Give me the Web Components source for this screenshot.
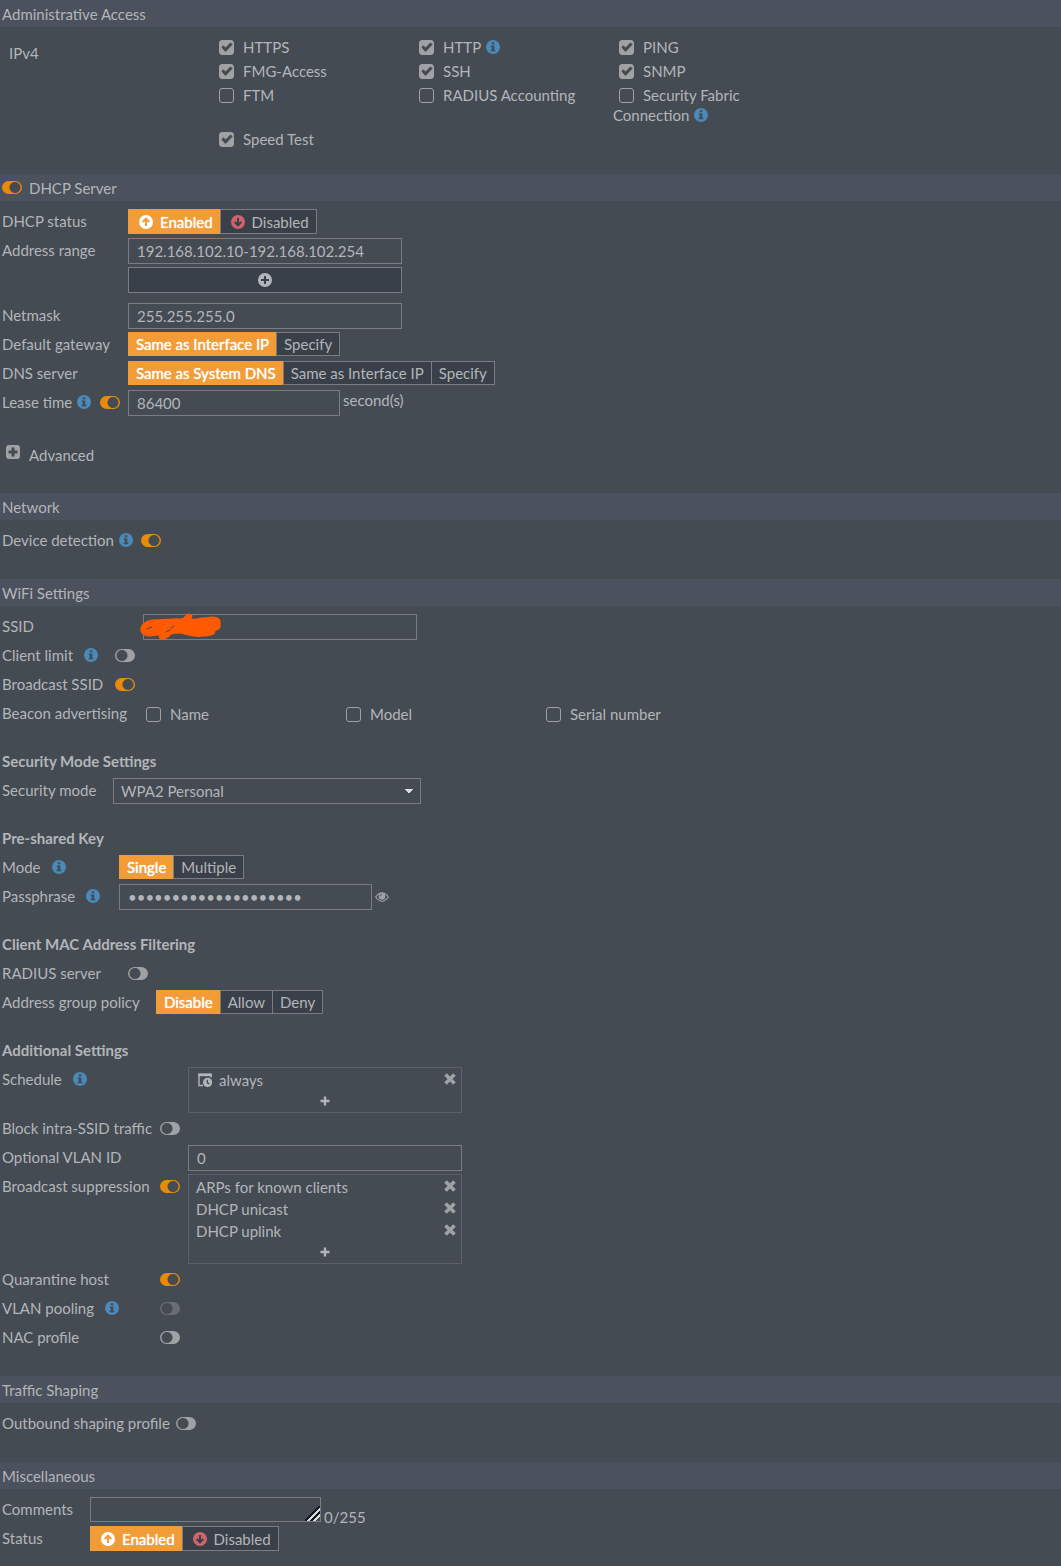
<!DOCTYPE html>
<html lang="en">
<head>
<meta charset="utf-8">
<meta name="viewport" content="width=device-width, initial-scale=1">
<title>Edit Interface</title>
<style>
  :root {
    --bg-color: #444b53;
    --header-color: #4b515d;
    --button-color: #3a4049;
    --text-color: #b3b6b9;
    --border-color: #7a7c81;
    --border-dim: #5c5f67;
    --icon-color: #a0a1a3;
    --info-color: #4a89b8;
    --accent-color: #f29c38;
    --switch-on: #e88a0c;
    --down-color: #d0646a;
  }

  body {
    margin: 0;
    background-color: var(--bg-color);
    color: var(--text-color);
    font: 15px/20px Lato, "Open Sans", sans-serif;
  }

  textarea::-webkit-resizer {
    background: linear-gradient(135deg, transparent 45%, #15181c 45% 54%, #d8dadc 54% 64%, #15181c 64% 74%, #d8dadc 74% 84%, transparent 84%);
  }
</style>
</head>
<body>

<main>
  <fw-section>
    <span slot="heading">Administrative Access</span>
    <fw-access>
      <span slot="label">IPv4</span>
      <fw-check checked>HTTPS</fw-check>
      <fw-check checked>HTTP <fw-icon name="info"></fw-icon></fw-check>
      <fw-check checked>PING</fw-check>
      <fw-check checked>FMG-Access</fw-check>
      <fw-check checked>SSH</fw-check>
      <fw-check checked>SNMP</fw-check>
      <fw-check>FTM</fw-check>
      <fw-check>RADIUS Accounting</fw-check>
      <fw-check>Security Fabric Connection <fw-icon name="info"></fw-icon></fw-check>
      <fw-check checked>Speed Test</fw-check>
    </fw-access>
  </fw-section>

  <fw-section style="--label-width: 118px">
    <input slot="switch" type="checkbox" role="switch" id="dhcp" checked>
    <label slot="heading" for="dhcp">DHCP Server</label>
    <fw-row>
      <span slot="label">DHCP status</span>
      <fw-segment tall label="DHCP status">
        <button type="button" aria-pressed="true"><fw-icon name="up"></fw-icon>Enabled</button>
        <button type="button" aria-pressed="false"><fw-icon name="down"></fw-icon>Disabled</button>
      </fw-segment>
    </fw-row>
    <fw-row stacked>
      <label slot="label" for="range">Address range</label>
      <input type="text" id="range" value="192.168.102.10-192.168.102.254">
      <button type="button" aria-label="Add address range"><fw-icon name="plus-circle"></fw-icon></button>
    </fw-row>
    <fw-row>
      <label slot="label" for="netmask">Netmask</label>
      <input type="text" id="netmask" value="255.255.255.0">
    </fw-row>
    <fw-row>
      <span slot="label">Default gateway</span>
      <fw-segment label="Default gateway">
        <button type="button" aria-pressed="true">Same as Interface IP</button>
        <button type="button" aria-pressed="false">Specify</button>
      </fw-segment>
    </fw-row>
    <fw-row>
      <span slot="label">DNS server</span>
      <fw-segment label="DNS server">
        <button type="button" aria-pressed="true">Same as System DNS</button>
        <button type="button" aria-pressed="false">Same as Interface IP</button>
        <button type="button" aria-pressed="false">Specify</button>
      </fw-segment>
    </fw-row>
    <fw-row style="--field-width: 212px" tight>
      <label slot="label" for="lease">Lease time</label>
      <fw-icon slot="info" name="info"></fw-icon>
      <input slot="switch" type="checkbox" role="switch" aria-label="Lease time enabled" checked>
      <input type="text" id="lease" value="86400">
      <span>second(s)</span>
    </fw-row>
    <fw-expander>Advanced</fw-expander>
  </fw-section>

  <fw-section style="--label-width: 159px">
    <span slot="heading">Network</span>
    <fw-row tight>
      <label slot="label" for="detection">Device detection</label>
      <fw-icon slot="info" name="info"></fw-icon>
      <input slot="switch" type="checkbox" role="switch" id="detection" checked>
    </fw-row>
  </fw-section>

  <fw-section>
    <span slot="heading">WiFi Settings</span>
    <fw-group style="--label-width: 133px">
      <fw-row>
        <label slot="label" for="ssid">SSID</label>
        <input type="text" id="ssid">
        <fw-scribble></fw-scribble>
      </fw-row>
      <fw-row>
        <label slot="label" for="limit">Client limit</label>
        <fw-icon slot="info" name="info"></fw-icon>
        <input slot="switch" type="checkbox" role="switch" id="limit">
      </fw-row>
      <fw-row>
        <label slot="label" for="broadcast">Broadcast SSID</label>
        <input slot="switch" type="checkbox" role="switch" id="broadcast" checked>
      </fw-row>
      <fw-row>
        <span slot="label">Beacon advertising</span>
        <fw-checks>
          <fw-check>Name</fw-check>
          <fw-check>Model</fw-check>
          <fw-check>Serial number</fw-check>
        </fw-checks>
      </fw-row>
    </fw-group>

    <fw-group heading="Security Mode Settings" style="--label-width: 103px; --field-width: 308px">
      <fw-row>
        <label slot="label" for="security">Security mode</label>
        <select id="security"><option>WPA2 Personal</option></select>
      </fw-row>
    </fw-group>

    <fw-group heading="Pre-shared Key" style="--label-width: 109px; --field-width: 253px">
      <fw-row>
        <span slot="label">Mode</span>
        <fw-icon slot="info" name="info"></fw-icon>
        <fw-segment label="Mode">
          <button type="button" aria-pressed="true">Single</button>
          <button type="button" aria-pressed="false">Multiple</button>
        </fw-segment>
      </fw-row>
      <fw-row>
        <label slot="label" for="passphrase">Passphrase</label>
        <fw-icon slot="info" name="info"></fw-icon>
        <input type="password" id="passphrase" value="wireless-passphrase1">
        <fw-reveal></fw-reveal>
      </fw-row>
    </fw-group>

    <fw-group heading="Client MAC Address Filtering" style="--label-width: 146px">
      <fw-row>
        <label slot="label" for="radius">RADIUS server</label>
        <input slot="switch" type="checkbox" role="switch" id="radius">
      </fw-row>
      <fw-row>
        <span slot="label">Address group policy</span>
        <fw-segment label="Address group policy">
          <button type="button" aria-pressed="true">Disable</button>
          <button type="button" aria-pressed="false">Allow</button>
          <button type="button" aria-pressed="false">Deny</button>
        </fw-segment>
      </fw-row>
    </fw-group>

    <fw-group heading="Additional Settings" style="--label-width: 178px">
      <fw-row>
        <span slot="label">Schedule</span>
        <fw-icon slot="info" name="info"></fw-icon>
        <fw-list>
          <fw-item><fw-icon name="schedule"></fw-icon>always</fw-item>
        </fw-list>
      </fw-row>
      <fw-row>
        <label slot="label" for="block">Block intra-SSID traffic</label>
        <input slot="switch" type="checkbox" role="switch" id="block">
      </fw-row>
      <fw-row>
        <label slot="label" for="vlan">Optional VLAN ID</label>
        <input type="text" id="vlan" value="0">
      </fw-row>
      <fw-row>
        <label slot="label" for="suppression">Broadcast suppression</label>
        <input slot="switch" type="checkbox" role="switch" id="suppression" checked>
        <fw-list>
          <fw-item>ARPs for known clients</fw-item>
          <fw-item>DHCP unicast</fw-item>
          <fw-item>DHCP uplink</fw-item>
        </fw-list>
      </fw-row>
      <fw-row>
        <label slot="label" for="quarantine">Quarantine host</label>
        <input slot="switch" type="checkbox" role="switch" id="quarantine" checked>
      </fw-row>
      <fw-row>
        <label slot="label" for="pooling">VLAN pooling</label>
        <fw-icon slot="info" name="info"></fw-icon>
        <input slot="switch" type="checkbox" role="switch" id="pooling" disabled>
      </fw-row>
      <fw-row>
        <label slot="label" for="nac">NAC profile</label>
        <input slot="switch" type="checkbox" role="switch" id="nac">
      </fw-row>
    </fw-group>
  </fw-section>

  <fw-section style="--label-width: 194px">
    <span slot="heading">Traffic Shaping</span>
    <fw-row>
      <label slot="label" for="shaping">Outbound shaping profile</label>
      <input slot="switch" type="checkbox" role="switch" id="shaping">
    </fw-row>
  </fw-section>

  <fw-section style="--label-width: 80px; --field-width: 231px">
    <span slot="heading">Miscellaneous</span>
    <fw-row>
      <label slot="label" for="comments">Comments</label>
      <textarea id="comments" maxlength="255"></textarea>
      <span class="counter">0/255</span>
    </fw-row>
    <fw-row>
      <span slot="label">Status</span>
      <fw-segment tall label="Status">
        <button type="button" aria-pressed="true"><fw-icon name="up"></fw-icon>Enabled</button>
        <button type="button" aria-pressed="false"><fw-icon name="down"></fw-icon>Disabled</button>
      </fw-segment>
    </fw-row>
  </fw-section>
</main>

<script>
// Adds an open shadow root filled from an HTML string
function render(element, html) {
  const template = document.createElement('template');
  template.innerHTML = html;
  element.attachShadow({ mode: 'open' }).appendChild(template.content.cloneNode(true));
}

// Shared by sections and rows, both take a switch in their "switch" slot
const switchStyles = `
  ::slotted(input[role="switch"]) {
    appearance: none;
    flex: none;
    width: 20px;
    height: 13px;
    margin: 0;
    border-radius: 7px;
    background: radial-gradient(circle at 7px 50%, var(--bg-color) 5px, var(--icon-color) 6px);
    cursor: pointer;
  }
  ::slotted(input[role="switch"]:checked) {
    background: radial-gradient(circle at 13px 50%, var(--bg-color) 5px, var(--switch-on) 6px);
  }
  ::slotted(input[role="switch"]:disabled) {
    opacity: 0.4;
    cursor: default;
  }
`;

const icons = {
  info: `<circle cx="7" cy="7" r="7" fill="var(--info-color)"/>
    <path d="M5.8 2.3h2.5v2H5.8zM4.9 5.5h3.4v4.3h1v1.5H4.7V9.8h1V7h-.8z" fill="var(--bg-color)"/>`,
  up: `<circle cx="7" cy="7" r="7" fill="#fff"/>
    <path d="M7 11V4M3.7 7 7 3.7 10.3 7" fill="none" stroke="var(--accent-color)" stroke-width="2"/>`,
  down: `<circle cx="7" cy="7" r="7" fill="var(--down-color)"/>
    <path d="M7 3v7M3.7 7 7 10.3 10.3 7" fill="none" stroke="var(--button-color)" stroke-width="2"/>`,
  'plus-circle': `<circle cx="7" cy="7" r="7" fill="var(--text-color)"/>
    <path d="M7 3v8M3 7h8" stroke="var(--button-color)" stroke-width="2"/>`,
  'plus-square': `<rect width="14" height="14" rx="3" fill="var(--icon-color)"/>
    <path d="M7 2.5v9M2.5 7h9" stroke="var(--bg-color)" stroke-width="3"/>`,
  plus: `<path d="M7 2.5v9M2.5 7h9" stroke="var(--text-color)" stroke-width="2.4"/>`,
  cross: `<path d="M2.5 2.5l9 9M11.5 2.5l-9 9" stroke="var(--icon-color)" stroke-width="3.6"/>`,
  schedule: `<path d="M5 12.5H1V1.5h12v3" fill="none" stroke="var(--text-color)" stroke-width="1.4"/>
    <path d="M.3.5h13.4v2.7H.3z" fill="var(--text-color)"/>
    <circle cx="9.6" cy="9.4" r="4.6" fill="var(--text-color)"/>
    <path d="M9.3 6.8v3l2 1" fill="none" stroke="var(--bg-color)" stroke-width="1.3"/>`,
  eye: `<path d="M.6 7C3 3.7 5 2.8 7 2.800S11 3.7 13.4 7C11 10.3 9 11.2 7 11.2S3 10.3.6 7z" fill="none" stroke="var(--icon-color)" stroke-width="1.1"/>
    <circle cx="7" cy="6.4" r="3.3" fill="var(--icon-color)"/>
    <path d="M5.2 6.3A1.9 1.9 0 0 1 7 4.6" fill="none" stroke="var(--bg-color)" stroke-width=".8"/>`
};

class FwIcon extends HTMLElement {
  connectedCallback() {
    if (this.shadowRoot) return;
    render(this, `
      <style>
        :host { display: inline-block; width: 14px; height: 14px; vertical-align: -1px; }
        svg { display: block; width: 100%; height: 100%; }
      </style>
      <svg viewBox="0 0 14 14" aria-hidden="true">${icons[this.getAttribute('name')]}</svg>
    `);
  }
}

class FwSection extends HTMLElement {
  constructor() {
    super();
    render(this, `
      <style>
        :host { display: block; }
        header {
          display: flex;
          align-items: center;
          gap: 7px;
          min-height: 27px;
          padding: 0 2px;
          background-color: var(--header-color);
        }
        .body { padding: 8px 0 22px; }
        ${switchStyles}
      </style>
      <header><slot name="switch"></slot><slot name="heading"></slot></header>
      <div class="body"><slot></slot></div>
    `);
  }
}

class FwGroup extends HTMLElement {
  connectedCallback() {
    if (this.shadowRoot) return;
    const heading = this.getAttribute('heading');
    render(this, `
      <style>
        :host { display: block; }
        h3 { margin: 0; padding: 19px 2px 5px; font-size: 15px; line-height: 24px; font-weight: 700; }
      </style>
      ${heading ? `<h3>${heading}</h3>` : ''}
      <slot></slot>
    `);
  }
}

class FwRow extends HTMLElement {
  constructor() {
    super();
    render(this, `
      <style>
        :host {
          display: grid;
          grid-template-columns: var(--label-width) minmax(0, 1fr);
          grid-auto-rows: minmax(26px, auto);
          column-gap: 8px;
          margin-bottom: 3px;
          padding-left: 2px;
        }
        :host([stacked]) { margin-bottom: 10px; }
        .label {
          display: flex;
          align-items: center;
          height: 24px;
          white-space: nowrap;
        }
        ::slotted([slot="info"]) { margin-left: 11px; }
        :host([tight]) ::slotted([slot="info"]) { margin-left: 5px; }
        .switch { display: flex; margin-left: auto; }
        .field {
          position: relative;
          display: flex;
          align-items: flex-start;
          gap: 3px;
        }
        :host([stacked]) .field { flex-direction: column; }
        ::slotted(input:not([role])), ::slotted(textarea), ::slotted(select), ::slotted(button) {
          box-sizing: border-box;
          width: var(--field-width, 274px);
          height: 26px;
          margin: 0;
          padding: 0 8px;
          border: 1px solid var(--border-color);
          border-radius: 0;
          outline: 0;
          background-color: transparent;
          color: inherit;
          font: inherit;
        }
        ::slotted(button) { background-color: var(--button-color); cursor: pointer; }
        ::slotted(textarea) { height: 25px; }
        ::slotted(select) {
          appearance: none;
          padding: 0 7px;
          background-image: conic-gradient(from -45deg at 50% 100%, #dcdddf 90deg, transparent 0);
          background-position: right 6px center;
          background-size: 10px 5px;
          background-repeat: no-repeat;
        }
        ::slotted(.counter) { align-self: flex-end; line-height: 12px; }
        ::slotted(fw-scribble) { position: absolute; left: -5px; top: -2px; }
        ${switchStyles}
      </style>
      <div class="label">
        <slot name="label"></slot>
        <slot name="info"></slot>
        <div class="switch"><slot name="switch"></slot></div>
      </div>
      <div class="field"><slot></slot></div>
    `);
  }
}

class FwCheck extends HTMLElement {
  connectedCallback() {
    if (this.shadowRoot) return;
    render(this, `
      <style>
        :host { display: block; padding: 2px 0; }
        ::slotted(fw-icon) { margin-left: 1px; }
        input {
          appearance: none;
          box-sizing: border-box;
          position: relative;
          width: 15px;
          height: 15px;
          margin: 0 9px 0 var(--box-indent, 6px);
          border: 1px solid var(--icon-color);
          border-radius: 3px;
          vertical-align: -2px;
        }
        input:checked { background-color: var(--icon-color); }
        input:checked::before {
          content: "";
          position: absolute;
          left: 2px;
          top: 2px;
          width: 7px;
          height: 3px;
          border: solid var(--bg-color);
          border-width: 0 0 3px 3px;
          box-sizing: content-box;
          transform: rotate(-45deg);
          transform-origin: 5px 3px;
        }
      </style>
      <label><input type="checkbox" ${this.hasAttribute('checked') ? 'checked' : ''}><slot></slot></label>
    `);
  }
}

class FwChecks extends HTMLElement {
  constructor() {
    super();
    render(this, `
      <style>
        :host {
          --box-indent: 3px;
          display: grid;
          grid-template-columns: repeat(3, 200px);
          padding-top: 1px;
        }
      </style>
      <slot></slot>
    `);
  }
}

class FwAccess extends HTMLElement {
  constructor() {
    super();
    render(this, `
      <style>
        :host { display: grid; grid-template-columns: 204px 1fr; padding-left: 9px; margin-bottom: 1px; }
        .label { padding-top: 8px; }
        .list { display: grid; grid-template-columns: repeat(3, 200px); }
      </style>
      <div class="label"><slot name="label"></slot></div>
      <div class="list"><slot></slot></div>
    `);
  }
}

class FwSegment extends HTMLElement {
  connectedCallback() {
    if (this.shadowRoot) return;
    render(this, `
      <style>
        :host { display: flex; height: 24px; }
        :host([tall]) { height: 25px; }
        div { display: flex; padding-left: 1px; }
        ::slotted(button) {
          display: flex;
          align-items: center;
          margin: 0 0 0 -1px;
          padding: 0 7px;
          border: 1px solid var(--border-color);
          background-color: var(--button-color);
          color: inherit;
          font: inherit;
          white-space: nowrap;
          cursor: pointer;
        }
        ::slotted(button[aria-pressed="true"]) {
          border-color: var(--accent-color);
          background-color: var(--accent-color);
          color: #fff;
          text-shadow: 0 0 1px #fff;
        }
      </style>
      <div role="group" aria-label="${this.getAttribute('label')}"><slot></slot></div>
    `);
    this.addEventListener('click', (e) => this.select(e.target.closest('button')));
    this.querySelectorAll('fw-icon').forEach(icon => { icon.style.margin = '0 7px 0 3px'; });
  }

  select(button) {
    if (!button) return;
    this.querySelectorAll('button').forEach(b => b.setAttribute('aria-pressed', b === button));
  }
}

class FwList extends HTMLElement {
  constructor() {
    super();
    render(this, `
      <style>
        :host {
          display: block;
          box-sizing: border-box;
          width: var(--field-width, 274px);
          padding: 1px 0;
          border: 1px solid var(--border-dim);
        }
        button {
          display: flex;
          align-items: center;
          justify-content: center;
          width: 100%;
          height: 20px;
          padding: 0;
          border: 0;
          background: none;
          cursor: pointer;
        }
      </style>
      <slot></slot>
      <button type="button" aria-label="Add entry"><fw-icon name="plus"></fw-icon></button>
    `);
  }
}

class FwItem extends HTMLElement {
  constructor() {
    super();
    render(this, `
      <style>
        :host { display: flex; justify-content: space-between; padding: 0 4px 0 7px; line-height: 22px; }
        ::slotted(fw-icon) { margin: 0 7px 0 2px; }
        button { display: flex; height: 20px; align-items: center; padding: 0; border: 0; background: none; cursor: pointer; }
      </style>
      <span><slot></slot></span>
      <button type="button" aria-label="Remove"><fw-icon name="cross"></fw-icon></button>
    `);
    this.shadowRoot.querySelector('button').addEventListener('click', () => this.remove());
  }
}

class FwExpander extends HTMLElement {
  constructor() {
    super();
    render(this, `
      <style>
        :host { display: block; margin: 26px 0 3px; }
        button {
          display: flex;
          gap: 9px;
          padding: 0 6px;
          border: 0;
          background: none;
          color: inherit;
          font: inherit;
          line-height: 26px;
          cursor: pointer;
        }
        fw-icon { margin-top: 3px; }
      </style>
      <button type="button" aria-expanded="false"><fw-icon name="plus-square"></fw-icon><slot></slot></button>
    `);
  }
}

class FwReveal extends HTMLElement {
  constructor() {
    super();
    render(this, `
      <style>
        :host { display: block; }
        button { display: flex; align-items: center; height: 25px; padding: 0; border: 0; background: none; cursor: pointer; }
      </style>
      <button type="button" aria-label="Show passphrase"><fw-icon name="eye"></fw-icon></button>
    `);
  }
}

// Marker strokes over the network name
class FwScribble extends HTMLElement {
  constructor() {
    super();
    render(this, `
      <style>
        :host { display: block; pointer-events: none; }
        svg { display: block; }
      </style>
      <svg width="86" height="30" viewBox="0 0 86 30" fill="none" stroke="#ff5a00" stroke-width="3" stroke-linecap="round" stroke-linejoin="round" aria-hidden="true">
        <path fill="#ff5a00" d="M4 18C3 14 8 10 14 9c8-1 14 0 20-1 5-1 8 1 12-1l4-4 3 1-2 4c8 1 12-2 17-1 8-2 14-1 13 5 1 4-2 5-5 6 1 4-6 5-11 5-6 1-12 0-18-2-6-2-10-1-14 0-3 3-7 6-10 5-2-2 0-4 2-5-6 1-10 2-15 2-4-1-6-3-6-5z"/>
        <path stroke="var(--bg-color)" stroke-width="1" d="M9 17l5-2M33 16l3-2M28 20l4-2"/>
      </svg>
    `);
  }
}

customElements.define('fw-icon', FwIcon);
customElements.define('fw-section', FwSection);
customElements.define('fw-group', FwGroup);
customElements.define('fw-row', FwRow);
customElements.define('fw-check', FwCheck);
customElements.define('fw-checks', FwChecks);
customElements.define('fw-access', FwAccess);
customElements.define('fw-segment', FwSegment);
customElements.define('fw-list', FwList);
customElements.define('fw-item', FwItem);
customElements.define('fw-expander', FwExpander);
customElements.define('fw-reveal', FwReveal);
customElements.define('fw-scribble', FwScribble);
</script>
</body>
</html>
